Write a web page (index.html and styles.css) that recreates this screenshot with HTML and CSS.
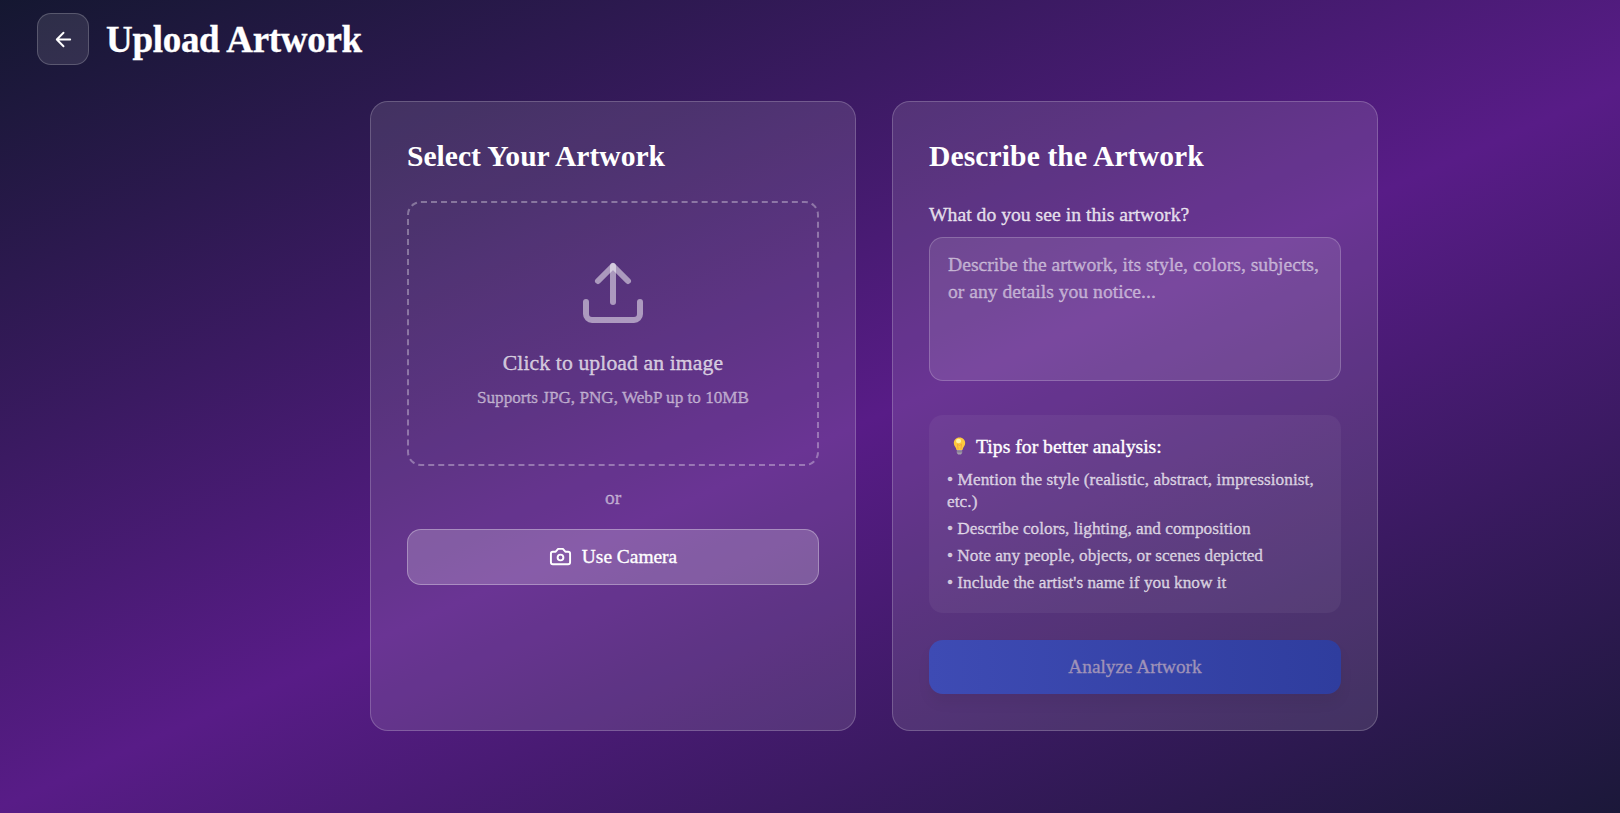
FILE: index.html
```html
<!DOCTYPE html>
<html lang="en">
<head>
<meta charset="utf-8">
<title>Upload Artwork</title>
<link rel="stylesheet" href="styles.css">
</head>
<body>
<header class="header">
  <button class="back" aria-label="Back"><svg class="icon" width="23" height="23" viewBox="0 0 24 24" fill="none" stroke="currentColor" stroke-width="2" stroke-linecap="round" stroke-linejoin="round"><path d="m12 19-7-7 7-7M19 12H5"/></svg></button>
  <h1 class="title">Upload Artwork</h1>
</header>
<main class="panels">
  <section class="card">
    <h2 class="heading">Select Your Artwork</h2>
    <div class="dropzone">
      <svg class="upload" width="72" height="72" viewBox="0 0 24 24" fill="none" stroke="currentColor" stroke-width="2" stroke-linecap="round" stroke-linejoin="round"><path d="M21 15v4a2 2 0 0 1-2 2H5a2 2 0 0 1-2-2v-4"/><path d="m17 8-5-5-5 5"/><path d="M12 3v12"/></svg>
      <p class="prompt">Click to upload an image</p>
      <p class="formats">Supports JPG, PNG, WebP up to 10MB</p>
    </div>
    <p class="or">or</p>
    <button class="camera"><svg class="icon camera-icon" width="23" height="23" viewBox="0 0 24 24" fill="none" stroke="currentColor" stroke-width="2" stroke-linecap="round" stroke-linejoin="round"><path d="M14.5 4h-5L7 7H4a2 2 0 0 0-2 2v9a2 2 0 0 0 2 2h16a2 2 0 0 0 2-2V9a2 2 0 0 0-2-2h-3z"/><circle cx="12" cy="13" r="3"/></svg><span>Use Camera</span></button>
  </section>
  <section class="card">
    <h2 class="heading describe">Describe the Artwork</h2>
    <label class="label" for="description">What do you see in this artwork?</label>
    <textarea class="field" id="description" placeholder="Describe the artwork, its style, colors, subjects, or any details you notice..."></textarea>
    <div class="tips">
      <h3 class="tips-title"><svg class="icon" width="13" height="18" viewBox="0.500 0 13 19"><path d="M7 .5C3.200.5 1 3.200 1 6.400c0 3 2.300 4.300 2.900 7.400h6.200c.6-3.100 2.900-4.400 2.900-7.400C13 3.200 10.800.5 7 .5z" fill="#fdc83d"/><path d="M5.500 13 4.800 7.500 7 9l2.200-1.500-.7 5.500" fill="none" stroke="#f6a33c"/><ellipse cx="6" cy="4.200" rx="2.700" ry="2.300" fill="#fff2a8"/><path d="M4.200 14h5.600v3L8.500 18.500h-3L4.200 17z" fill="#a6a0ae"/><path d="M4.200 15.700h5.600" stroke="#776d83"/></svg><span>Tips for better analysis:</span></h3>
      <ul class="tips-list">
        <li class="tip wide">• Mention the style (realistic, abstract, impressionist,<br>etc.)</li>
        <li class="tip">• Describe colors, lighting, and composition</li>
        <li class="tip">• Note any people, objects, or scenes depicted</li>
        <li class="tip">• Include the artist's name if you know it</li>
      </ul>
    </div>
    <button class="analyze" disabled>Analyze Artwork</button>
  </section>
</main>
</body>
</html>
```

FILE: styles.css
```css
* { box-sizing: border-box; margin: 0; padding: 0; }
body {
  height: 813px;
  overflow: hidden;
  font-family: "Liberation Serif", serif;
  color: #fff;
  -webkit-text-stroke: .35px currentColor;
  background: #0f172a linear-gradient(156deg, #0f172a -4%, #581c87 50%, #0f172a 104%) 0 0 / 1620px 892px no-repeat;
}
button, textarea { font: inherit; color: inherit; }
.icon { flex: none; }
.header { display: flex; align-items: center; gap: 17px; padding: 13px 37px 0; height: 65px; }
.back {
  display: flex; align-items: center; justify-content: center;
  width: 52px; height: 52px; border-radius: 14px;
  background: rgba(255,255,255,.1); border: 1px solid rgba(255,255,255,.2);
}
.title { padding-top: 2px; font-size: 37px; line-height: 42px; font-weight: 700; letter-spacing: -.3px; white-space: nowrap; }
.panels {
  display: grid; grid-template-columns: 486px 486px; gap: 36px;
  height: 630px; margin: 36px 0 0 370px;
}
.card {
  display: flex; flex-direction: column; padding: 36px;
  border: 1px solid rgba(255,255,255,.2); border-radius: 18px;
  background: rgba(255,255,255,.11);
}
.heading { font-size: 29.600px; line-height: 37px; height: 37px; margin-bottom: 26px; font-weight: 700; white-space: nowrap; -webkit-text-stroke: 0; }
.describe { letter-spacing: .1px; }
.dropzone {
  display: flex; flex-direction: column; align-items: center;
  height: 265px; padding-top: 54px;
  border: 2px dashed rgba(255,255,255,.33); border-radius: 14px;
  white-space: nowrap;
}
.upload { color: rgba(255,255,255,.5); flex: none; }
.prompt { margin-top: 18px; font-size: 21.700px; line-height: 32px; letter-spacing: .1px; color: rgba(255,255,255,.7); }
.formats { margin-top: 5px; font-size: 17.150px; line-height: 28px; color: rgba(255,255,255,.5); }
.or { height: 63px; text-align: center; font-size: 19.500px; line-height: 63px; color: rgba(255,255,255,.5); }
.camera {
  display: flex; align-items: center; justify-content: center; gap: 10px;
  height: 56px; border-radius: 14px; font-size: 19.400px;
  background: rgba(255,255,255,.2); border: 1px solid rgba(255,255,255,.3);
}
.camera-icon { margin-bottom: 2px; }
.label { font-size: 19.700px; line-height: 26px; margin-bottom: 10px; color: rgba(255,255,255,.8); }
.field {
  height: 144px; flex: none; padding: 13px 15px 13px 18px; resize: none; overflow: hidden;
  font-size: 19.650px; line-height: 27px; border-radius: 14px;
  background: rgba(255,255,255,.1); border: 1px solid rgba(255,255,255,.2);
}
.field::placeholder { color: rgba(255,255,255,.5); }
.tips { height: 198px; margin: 34px 0 27px; padding: 18px; border-radius: 14px; background: rgba(255,255,255,.05); }
.tips-title { display: flex; align-items: center; gap: 10px; padding-left: 6px; height: 26px; font-size: 19.700px; font-weight: 400; }
.tips-list { list-style: none; margin-top: 10px; color: rgba(255,255,255,.7); }
.tip { font-size: 17.250px; line-height: 22px; margin-bottom: 5px; white-space: nowrap; }
.wide { letter-spacing: .07px; }
.analyze {
  height: 54px; border: 0; border-radius: 14px; font-size: 19.300px;
  color: #9f92b8;
  background: linear-gradient(to right, #3e4bb4, #2f3d9e);
  box-shadow: 0 9px 14px rgba(0,0,0,.05);
}
```
